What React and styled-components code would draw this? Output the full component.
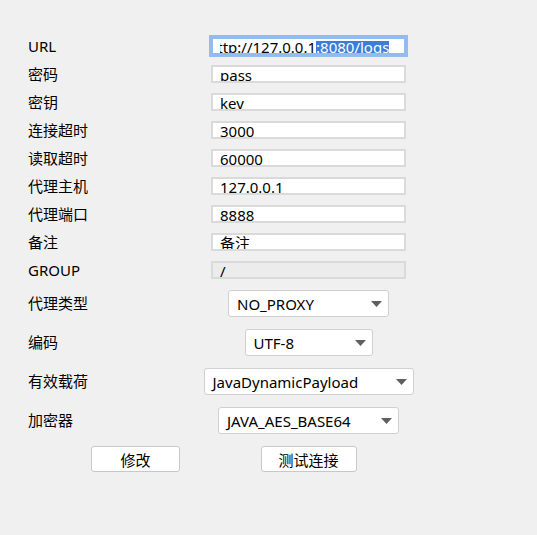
import React from 'react';
import styled, { createGlobalStyle } from 'styled-components';

const GlobalStyle = createGlobalStyle`
  html, body { margin: 0; padding: 0; background: #f0f0f0; }
  body {
    font-family: "Noto Sans", "Noto Sans CJK SC", sans-serif;
    font-size: 15px;
    color: #000;
  }
`;

const Page = styled.div`
  width: 537px;
  height: 535px;
  box-sizing: border-box;
  padding: 37px 0 0 28px;
`;

const Grid = styled.div`
  display: grid;
  grid-template-columns: 170px 221px;
  row-gap: ${p => p.$gap}px;
  align-items: center;
  margin-top: ${p => p.$top || 0}px;
`;

const Label = styled.div`
  justify-self: start;
  line-height: 18px;
  white-space: nowrap;
  margin-top: ${p => p.$lift || 0}px;
`;

const Field = styled.div`
  justify-self: center;
  box-sizing: border-box;
  width: 195px;
  height: 18px;
  border: 2px solid ${p => (p.$focused ? '#94bbee' : '#dadada')};
  outline: ${p => (p.$focused ? '2px solid #94bbee' : 'none')};
  background: ${p => (p.$disabled ? '#ececec' : '#fff')};
  padding: 0 7px;
`;

const FieldText = styled.div`
  height: 14px;
  line-height: 16px;
  white-space: nowrap;
  overflow: hidden;
`;

const Scrolled = styled.span`
  margin-left: -12px;
`;

const Selected = styled.span`
  display: inline-block;
  height: 12px;
  line-height: 12px;
  background: #3b7dd8;
  color: #fff;
`;

const Combo = styled.div`
  justify-self: center;
  box-sizing: border-box;
  width: ${p => p.$w}px;
  height: 27px;
  background: #fff;
  border: 1px solid #d0d0d0;
  border-radius: 3px;
  display: flex;
  align-items: center;
  justify-content: space-between;
  padding: 0 6px 0 8px;
  white-space: nowrap;
`;

const Button = styled.button`
  justify-self: ${p => (p.$offset ? 'start' : 'center')};
  margin-left: ${p => p.$offset || 0}px;
  box-sizing: border-box;
  width: ${p => p.$w}px;
  height: 26px;
  background: #fff;
  border: 1px solid #c8c8c8;
  border-radius: 3px;
  padding: 0;
  font-family: inherit;
  font-size: 15px;
  color: #000;
`;

const Arrow = () => (
  <svg width="11" height="6" viewBox="0 0 11 6">
    <polygon points="0,0 11,0 5.5,6" fill="#5f5f5f" />
  </svg>
);

const fields = [
  ['密码', 'pass'],
  ['密钥', 'key'],
  ['连接超时', '3000'],
  ['读取超时', '60000'],
  ['代理主机', '127.0.0.1'],
  ['代理端口', '8888'],
  ['备注', '备注'],
];

const combos = [
  ['代理类型', 'NO_PROXY', 161],
  ['编码', 'UTF-8', 128],
  ['有效载荷', 'JavaDynamicPayload', 210],
  ['加密器', 'JAVA_AES_BASE64', 181],
];

export default function App() {
  return (
    <>
      <GlobalStyle />
      <Page>
        <Grid $gap={10}>
          <Label>URL</Label>
          <Field $focused>
            <FieldText>
              <Scrolled>http://127.0.0.1</Scrolled>
              <Selected>:8080/logs</Selected>
            </FieldText>
          </Field>
          {fields.map(([l, v]) => (
            <React.Fragment key={l}>
              <Label>{l}</Label>
              <Field>
                <FieldText>{v}</FieldText>
              </Field>
            </React.Fragment>
          ))}
          <Label>GROUP</Label>
          <Field $disabled>
            <FieldText>/</FieldText>
          </Field>
        </Grid>
        <Grid $gap={12} $top={11}>
          {combos.map(([l, v, w]) => (
            <React.Fragment key={l}>
              <Label $lift={-2}>{l}</Label>
              <Combo $w={w}>
                <span>{v}</span>
                <Arrow />
              </Combo>
            </React.Fragment>
          ))}
        </Grid>
        <Grid $gap={0} $top={12}>
          <Button $w={89} $offset={63}>修改</Button>
          <Button $w={96}>测试连接</Button>
        </Grid>
      </Page>
    </>
  );
}
